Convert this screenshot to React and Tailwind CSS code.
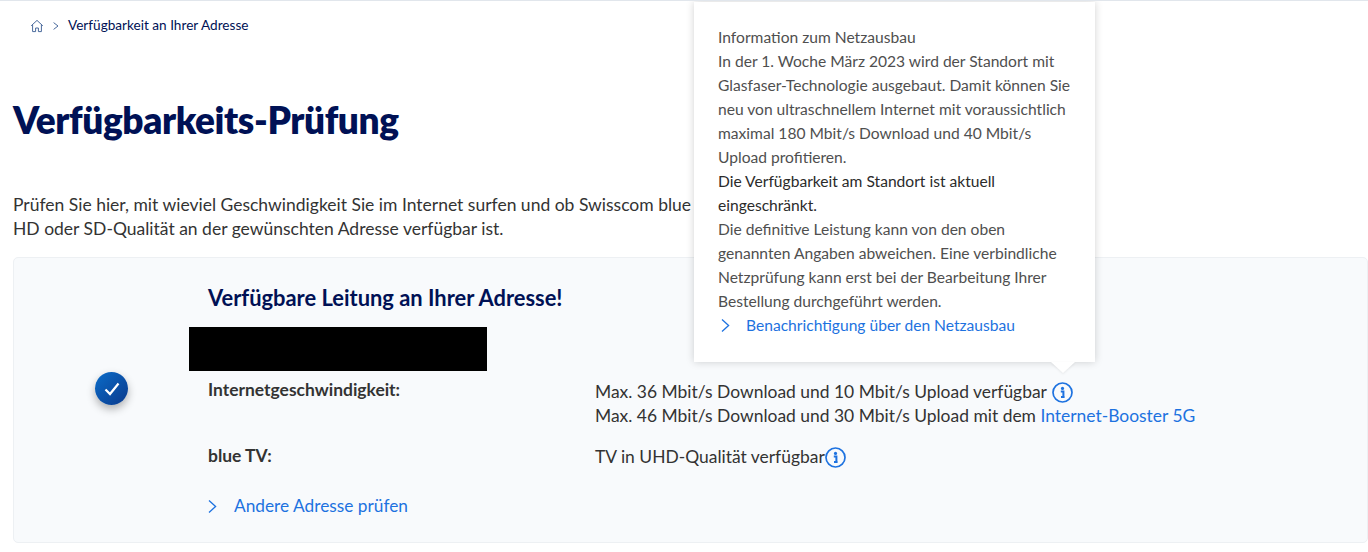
const font = { fontFamily: '"Lato", "Noto Sans", sans-serif' };

function Chevron({ className = "" }) {
  return (
    <svg viewBox="0 0 9 13" className={`w-[9px] h-[13px] shrink-0 ${className}`} fill="none" stroke="currentColor" strokeWidth="1.3">
      <path d="M1 .6 7.6 6.5 1 12.4" />
    </svg>
  );
}

function InfoIcon() {
  return (
    <svg viewBox="0 0 21 21" className="w-[21px] h-[21px] shrink-0" fill="none">
      <circle cx="10.5" cy="10.5" r="9.5" stroke="#1d72e0" strokeWidth="1.7" />
      <circle cx="10.5" cy="6.4" r="1.6" fill="#1d72e0" />
      <path d="M8.8 9.6h2.6v4.4M9 15h3.6" stroke="#1d72e0" strokeWidth="2" />
    </svg>
  );
}

function HomeIcon() {
  return (
    <svg viewBox="0 0 14 14" className="w-[14px] h-[14px]" fill="none" stroke="#4a6a9c" strokeWidth="1">
      <path d="M1.2 6.8 7 1.4l5.8 5.4M2.6 5.8v6.8h3V9h2.8v3.6h3V5.8" />
    </svg>
  );
}

function Tooltip() {
  return (
    <div className="absolute left-[694px] top-[1px] w-[401px] h-[360px] bg-white shadow-[0_0_8px_rgba(0,0,0,0.18)] pl-6 pt-[23px] text-[15.6px] leading-6 text-[#4f4f4f] z-10 whitespace-nowrap">
      <p>Information zum Netzausbau</p>
      <p>In der 1. Woche März 2023 wird der Standort mit</p>
      <p>Glasfaser-Technologie ausgebaut. Damit können Sie</p>
      <p>neu von ultraschnellem Internet mit voraussichtlich</p>
      <p>maximal 180 Mbit/s Download und 40 Mbit/s</p>
      <p>Upload profitieren.</p>
      <p className="text-[#2b2b2b]">Die Verfügbarkeit am Standort ist aktuell</p>
      <p className="text-[#2b2b2b]">eingeschränkt.</p>
      <p>Die definitive Leistung kann von den oben</p>
      <p>genannten Angaben abweichen. Eine verbindliche</p>
      <p>Netzprüfung kann erst bei der Bearbeitung Ihrer</p>
      <p>Bestellung durchgeführt werden.</p>
      <a className="flex items-center text-[#1d72e0]">
        <Chevron className="ml-[3px] mr-[16px]" />
        Benachrichtigung über den Netzausbau
      </a>
      <div className="absolute left-[357px] bottom-[-11px] w-0 h-0 border-l-[12px] border-r-[12px] border-t-[11px] border-l-transparent border-r-transparent border-t-white drop-shadow-[0_1px_1px_rgba(0,0,0,0.08)]" />
    </div>
  );
}

export default function App() {
  return (
    <div className="relative min-h-[552px] bg-white border-t border-[#e1e6ec] overflow-hidden" style={font}>
      <Tooltip />

      <nav className="flex items-center pl-[30px] pt-[16px] h-[17px] box-content text-[13.6px] text-[#001155]">
        <HomeIcon />
        <svg viewBox="0 0 6 8" className="w-[6px] h-[8px] ml-[9px] mr-[9px]" fill="none" stroke="#4a6a9c" strokeWidth="1">
          <path d="M.6.6 5 4 .6 7.4" />
        </svg>
        <span>Verfügbarkeit an Ihrer Adresse</span>
      </nav>

      <h1 className="ml-[13px] mt-[61px] text-[37px] tracking-[-0.4px] leading-[50px] font-extrabold text-[#001155]">Verfügbarkeits-Prüfung</h1>

      <p className="ml-[13px] mt-[48px] text-[17.5px] leading-6 text-[#333333]">
        Prüfen Sie hier, mit wieviel Geschwindigkeit Sie im Internet surfen und ob Swisscom blue
        <br />
        HD oder SD-Qualität an der gewünschten Adresse verfügbar ist.
      </p>

      <section className="ml-[13px] mt-[16px] h-[286px] bg-[#f8fafc] border border-[#edf0f3] rounded-[5px] flex">
        <div className="w-[175px] shrink-0 pl-[81px] pt-[114px]">
          <div className="w-[33px] h-[33px] rounded-full bg-gradient-to-br from-[#0a6cc9] to-[#0b3a8c] shadow-[0_4px_8px_rgba(0,0,0,0.3)] flex items-center justify-center">
            <svg viewBox="0 0 16 14" className="w-4 h-[14px]" fill="none" stroke="white" strokeWidth="2.2">
              <path d="M1.5 7.5 6 12l8.5-10.5" />
            </svg>
          </div>
        </div>

        <div className="flex-1 pt-[25px]">
          <h2 className="ml-[19px] text-[21.9px] leading-[30px] font-bold text-[#001155]">Verfügbare Leitung an Ihrer Adresse!</h2>
          <div className="w-[298px] h-[44px] bg-black mt-[14px]" />

          <div className="ml-[19px] grid grid-cols-[387px_1fr] text-[17.45px] leading-6 text-[#333333] mt-[7px]">
            <div className="font-bold">Internetgeschwindigkeit:</div>
            <div className="pt-[2px]">
              <div className="flex items-center gap-[5px] h-6">
                Max. 36 Mbit/s Download und 10 Mbit/s Upload verfügbar <InfoIcon />
              </div>
              <div>
                Max. 46 Mbit/s Download und 30 Mbit/s Upload mit dem <a className="text-[#1d72e0]">Internet-Booster 5G</a>
              </div>
            </div>
            <div className="font-bold mt-[16px]">blue TV:</div>
            <div className="flex items-center mt-[17px] h-6">
              TV in UHD-Qualität verfügbar<InfoIcon />
            </div>
          </div>

          <a className="ml-[19px] flex items-center mt-[25px] text-[17.3px] leading-6 text-[#1d72e0]">
            <Chevron className="mr-[17px]" />
            Andere Adresse prüfen
          </a>
        </div>
      </section>
    </div>
  );
}
